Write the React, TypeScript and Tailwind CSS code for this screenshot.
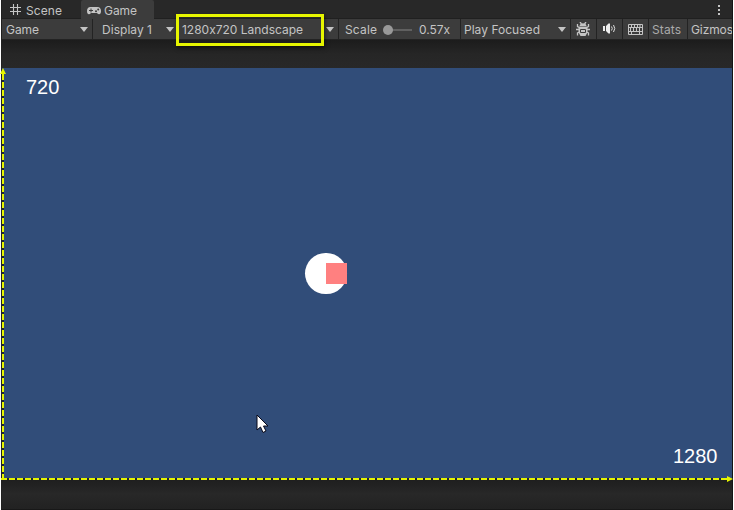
import React from "react";

const cell = "relative flex h-[20px] shrink-0 items-center border-r border-[#232323] bg-[#3c3c3c]";

function Txt({ children, w, className = "" }: { children: string; w: number; className?: string }) {
  return (
    <svg className={`block shrink-0 overflow-visible ${className}`} width={w} height="18" fill="currentColor">
      <text x="0" y="13.500" fontSize="12" textLength={w} lengthAdjust="spacing" className="[font-feature-settings:'calt'_0]">{children}</text>
    </svg>
  );
}

function Caret({ className = "" }: { className?: string }) {
  return (
    <svg className={`block shrink-0 ${className}`} width="8" height="5" viewBox="0 0 8 5">
      <path d="M0 0H8L4 5Z" fill="#c4c4c4" />
    </svg>
  );
}

function Bug() {
  return (
    <svg className="ml-[5px] block" width="14" height="14" viewBox="0 0 14 14" fill="none" stroke="#c4c4c4">
      <path d="M4 0L5.500 2M10 0L8.500 2M1.500 2V4.500L3.500 5.500M12.500 2V4.500L10.500 5.500M0 7.500H3M11 7.500H14M3.500 10L1.500 11V13.500M10.500 10L12.500 11V13.500" strokeWidth="1.3" />
      <path d="M3.500 4.200C3.500 0.200 10.500 0.200 10.500 4.200Z" fill="#c4c4c4" stroke="none" />
      <path d="M2.500 4.800H11.500V10.500L9.500 14H4.500L2.500 10.500Z" fill="#c4c4c4" stroke="none" />
      <path d="M4.500 7.500H9.500V10.500H4.500Z" stroke="#3c3c3c" />
    </svg>
  );
}

function Speaker() {
  return (
    <svg className="ml-[6px] mb-px block" width="13" height="11" viewBox="0 0 13 11" fill="none">
      <path d="M0 3H2V8H0ZM3 3L5.500 0.500H7V10.500H5.500L3 8Z" fill="#eeeeee" />
      <path d="M8.500 3.500Q10 5.500 8.500 7.500M10.500 2Q13 5.500 10.500 9" stroke="#dddddd" />
    </svg>
  );
}

function Keyboard() {
  return (
    <svg className="ml-[5px] block" width="15" height="11" viewBox="0 0 15 11" fill="none" stroke="#c4c4c4">
      <path d="M0.500 0.500H14.500V10.500H0.500ZM0 3.500H15M0 7.500H15M3.500 0V3.500M6.500 0V3.500M9.500 0V3.500M12 0V3.500M2.500 4V7M5.500 4V7M8.500 4V7M11.500 4V7M3.500 7.500V10M11.500 7.500V10" />
    </svg>
  );
}

export default function App() {
  return (
    <div className="relative h-[510px] w-[734px] overflow-hidden bg-white pl-px font-['Inter','Liberation_Sans',sans-serif] text-[#c4c4c4]">
      <div className="flex h-[510px] w-[732px] flex-col overflow-hidden border-x border-b border-b-[#181818] border-l-[#202020] border-r-[#151515] bg-[#282828]">
        <div className="flex h-[19px] shrink-0 shadow-[inset_0_-1px_0_#202020]">
          <div className="flex w-[79px] items-center pl-2">
            <svg width="11" height="11" viewBox="0 0 11 11" stroke="#c4c4c4" strokeWidth="1.100" className="block">
              <path d="M3.500 0V11M7.500 0V11M0 3.500H11M0 7.500H11" />
            </svg>
            <Txt w={36} className="ml-[5px] mt-px">Scene</Txt>
          </div>
          <div className="flex w-[73px] items-center rounded-t-[2px] bg-[#3c3c3c] pl-[6px]">
            <svg width="14" height="8" viewBox="0 0 14 8" className="mt-[2px] block">
              <path d="M3.500 0H10.500C13 0 14 2 14 4C14 8 11.500 8 10 6H4C2.500 8 0 8 0 4C0 2 1 0 3.500 0Z" fill="#c4c4c4" />
              <path d="M2 3.500H6M4 1.500V5.500" stroke="#3c3c3c" />
              <circle cx="9" cy="4.300" r="1" fill="#3c3c3c" /><circle cx="11.200" cy="2.600" r="1" fill="#3c3c3c" />
            </svg>
            <Txt w={33} className="ml-[3px] mt-px">Game</Txt>
          </div>
          <div className="ml-auto flex w-[26px] flex-col items-center justify-center gap-[2px]">
            <i className="h-[2px] w-[2px] bg-[#c4c4c4]" /><i className="h-[2px] w-[2px] bg-[#c4c4c4]" /><i className="h-[2px] w-[2px] bg-[#c4c4c4]" />
          </div>
        </div>
        <div className="flex h-[21px] shrink-0 border-b border-[#232323] bg-[#3c3c3c]">
          <div className={`${cell} w-[91px] pl-[4px]`}><Txt w={33}>Game</Txt><Caret className="ml-auto mr-[4px]" /></div>
          <div className={`${cell} w-[84px] pl-[9px]`}><Txt w={50}>Display 1</Txt><Caret className="ml-auto mr-[2px]" /></div>
          <div className={`${cell} w-[162px] pl-[5px]`}><Txt w={121}>1280x720 Landscape</Txt><Caret className="ml-auto mr-[4px]" /></div>
          <div className={`${cell} w-[122px] pl-[6px]`}>
            <Txt w={32}>Scale</Txt>
            <svg width="31" height="12" className="ml-[5px] mt-px block"><path d="M5 6H30" stroke="#606060" strokeWidth="2" /><circle cx="6" cy="6" r="5" fill="#999999" /></svg>
            <Txt w={31} className="ml-[6px]">0.57x</Txt>
          </div>
          <div className={`${cell} w-[110px] pl-[3px]`}><Txt w={76}>Play Focused</Txt><Caret className="ml-auto mr-[4px]" /></div>
          <div className={`${cell} w-[26px]`}><Bug /></div>
          <div className={`${cell} w-[26px]`}><Speaker /></div>
          <div className={`${cell} w-[26px]`}><Keyboard /></div>
          <div className={`${cell} w-[39px] pl-[3px] text-[#aaaaaa]`}><Txt w={29}>Stats</Txt></div>
          <div className="flex h-[20px] min-w-0 flex-1 items-center overflow-hidden pl-[3px]"><Txt w={42}>Gizmos</Txt></div>
        </div>
        <div className="h-[28px] shrink-0 bg-gradient-to-b from-[#1c1c1c] via-[#262626] to-[#282828]" />
        <div className="relative h-[411px] shrink-0 bg-[#314d79] font-['Liberation_Sans',sans-serif] text-[20px] leading-[22px] text-white">
          <span className="absolute left-[24px] top-[8px]">720</span>
          <span className="absolute left-[671px] top-[377px]">1280</span>
          <div className="absolute left-[303px] top-[185px] h-[41px] w-[42px] rounded-full bg-white" />
          <div className="absolute left-[324px] top-[195px] h-[21px] w-[21px] bg-[#ff8080]" />
          <svg className="absolute left-[254px] top-[346px]" width="14" height="20" viewBox="0 0 14 20">
            <path d="M1 1V16L4.500 13L7 18.500L10 17L7.500 12H12Z" fill="white" stroke="#080818" />
          </svg>
        </div>
        <div className="h-[30px] shrink-0 bg-gradient-to-b from-[#1e1e1e] via-[#282828] to-[#222222]" />
      </div>
      <div className="absolute left-[176px] top-[14px] h-[32px] w-[148px] border-[3px] border-[#e6f500] shadow-[1px_2px_4px_rgba(0,0,0,0.5)]" />
      <svg className="absolute left-0 top-0" width="734" height="510" fill="none" stroke="#e6f500" strokeWidth="2">
        <path d="M3 480V72M1 479H729" stroke="#1c2638" />
        <path d="M3 480V73" strokeDasharray="6 2" />
        <path d="M1 479H728" strokeDasharray="6 2" />
        <path d="M3 68L6 74H0ZM733 479L727 476V482Z" fill="#e6f500" stroke="none" />
      </svg>
    </div>
  );
}
